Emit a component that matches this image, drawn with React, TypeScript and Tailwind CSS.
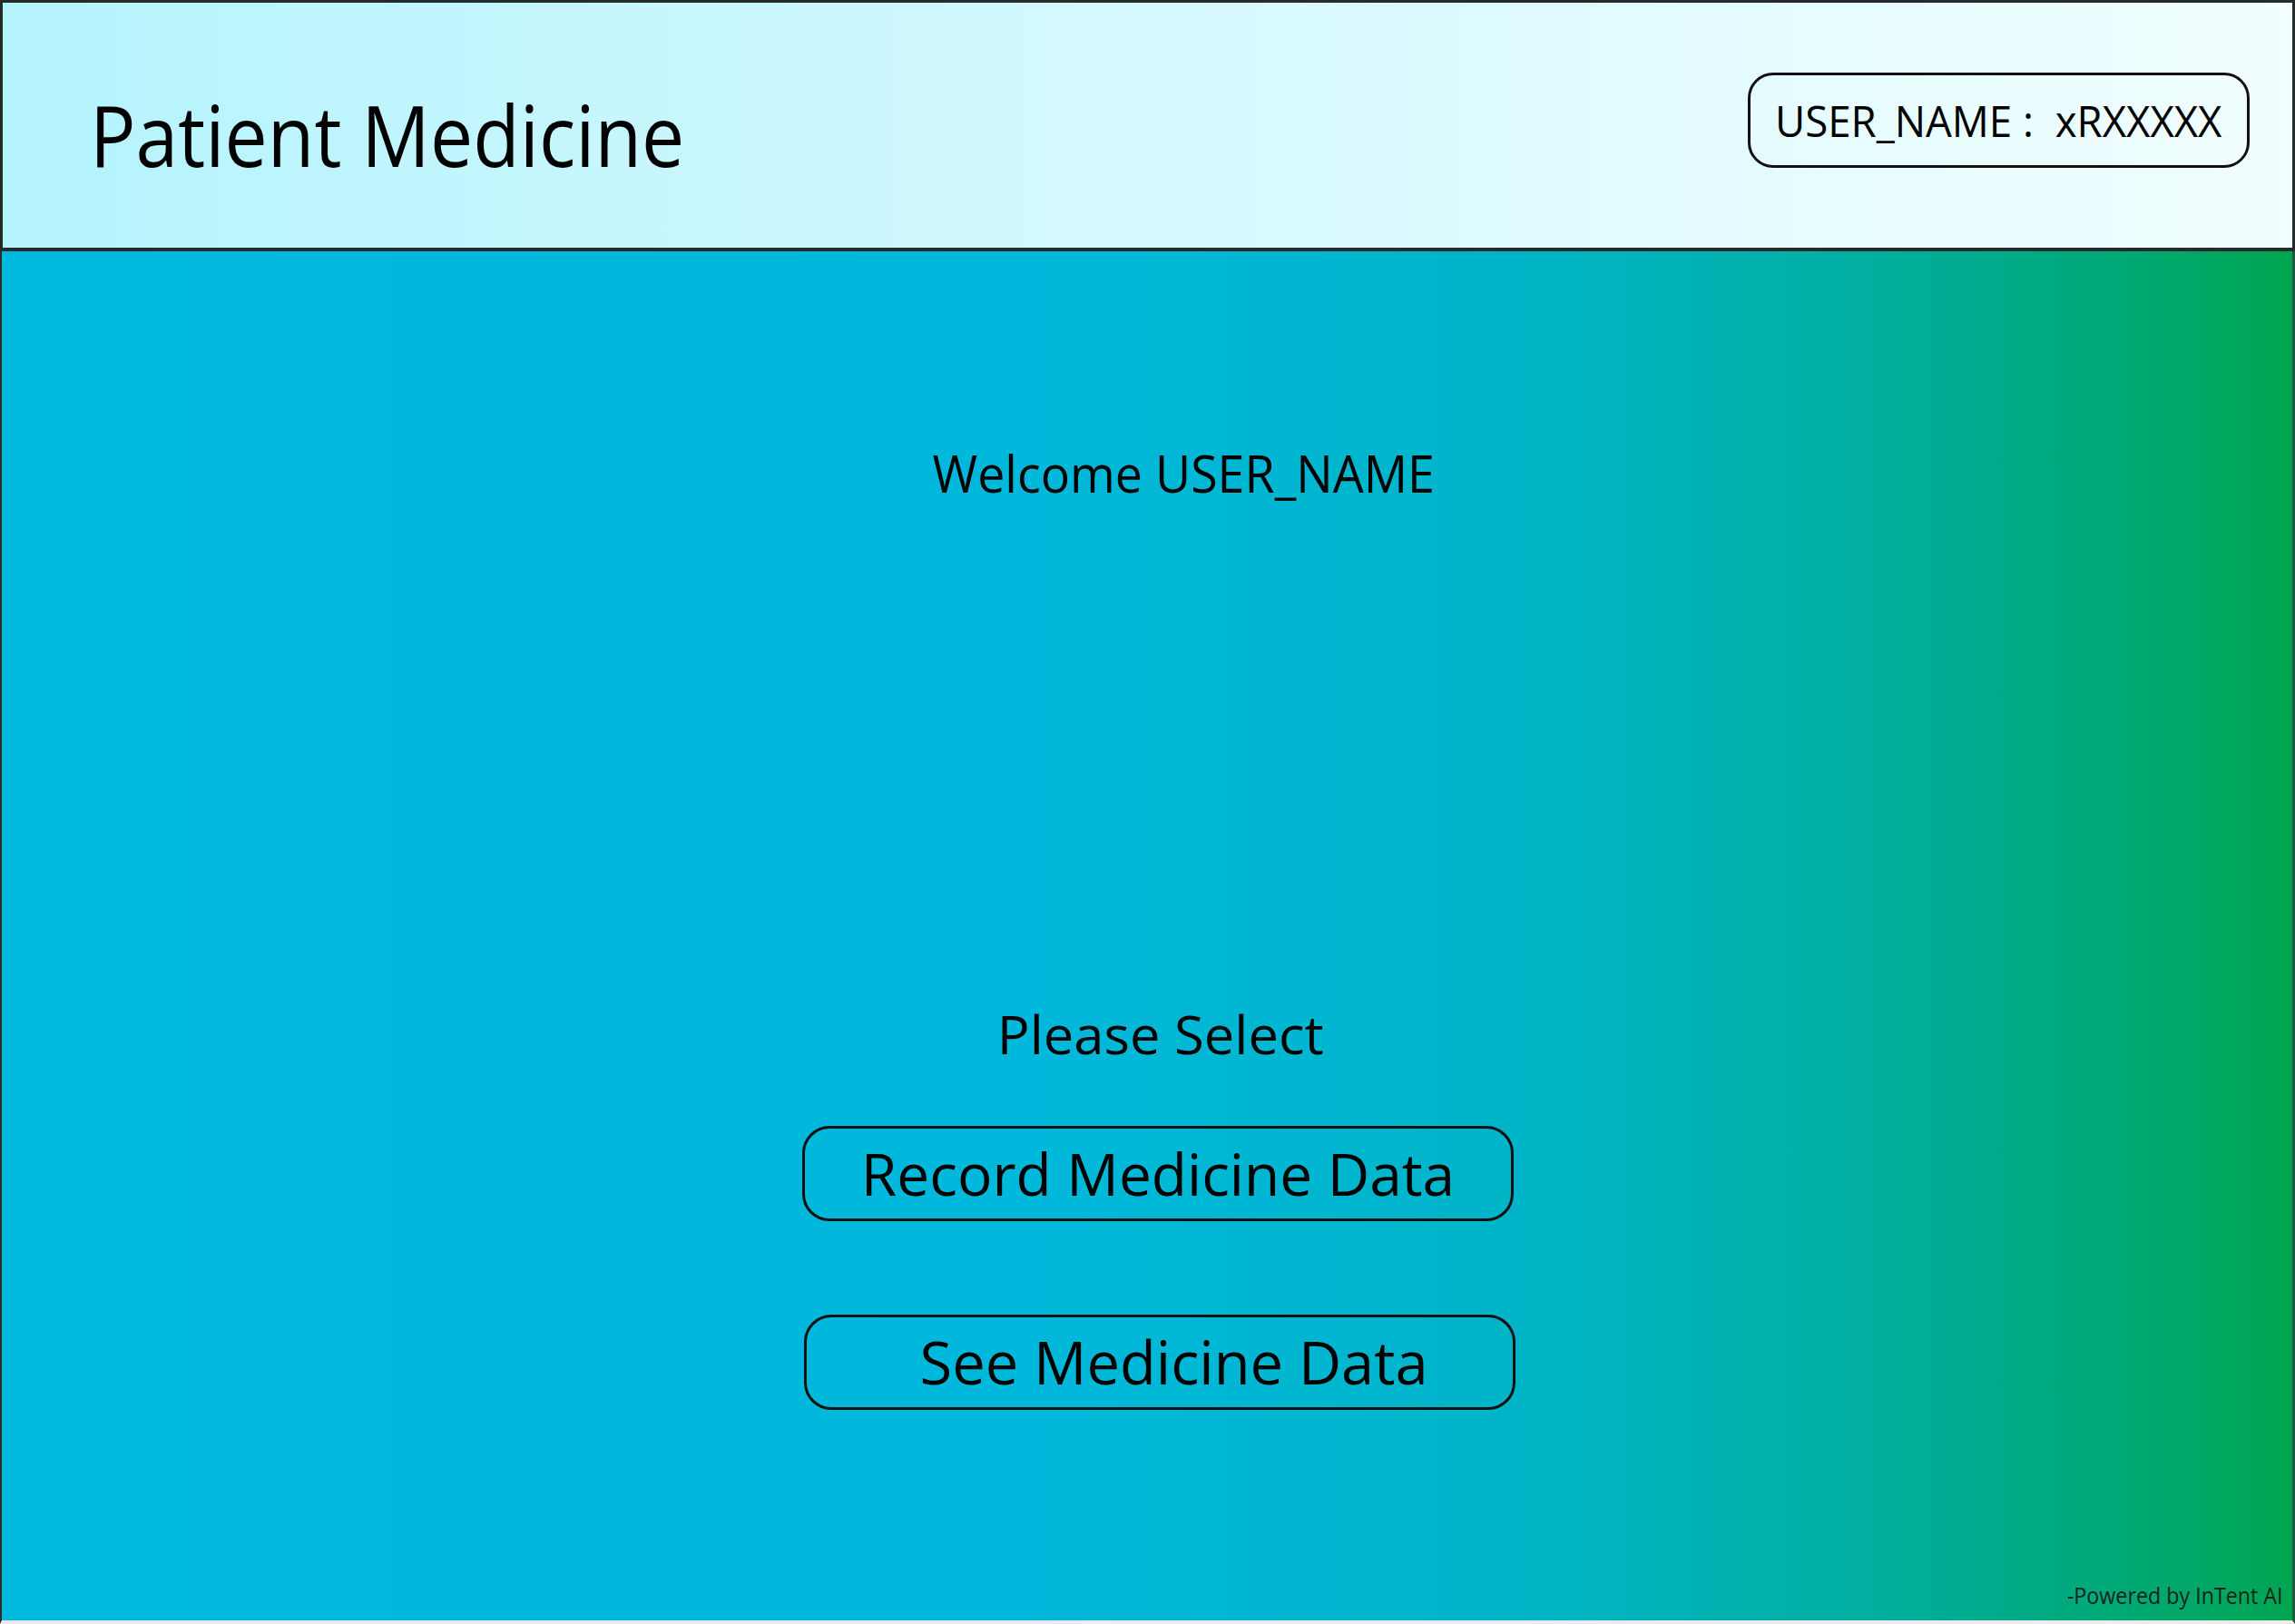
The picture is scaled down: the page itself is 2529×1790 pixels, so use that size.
export default function App() {
  return (
    <div
      className="w-[2529px] h-[1790px] flex flex-col bg-[#e9ecec] text-black"
      style={{ fontFamily: '"Open Sans", "Noto Sans", sans-serif' }}
    >
      {/* top bar */}
      <header className="h-[277px] shrink-0 flex items-start justify-between border-[3px] border-b-4 border-[#252a2b] bg-linear-to-r from-[#b5f3fd] to-[#f2feff]">
        <h1 className="mt-[98px] ml-[96px] text-[94px] leading-none font-normal whitespace-nowrap origin-left scale-x-[0.895]">
          Patient Medicine
        </h1>

        <div className="mt-[77px] mr-[47px] w-[553px] h-[105px] flex items-center justify-center rounded-[28px] border-[3px] border-[#111]">
          <span className="text-[48px] leading-none whitespace-pre scale-x-[0.95]">
            {"USER_NAME :  xRXXXXX"}
          </span>
        </div>
      </header>

      {/* main area */}
      <main className="flex-1 flex flex-col items-center border-l-2 border-r-[3px] border-b-4 border-l-[#2b2b2b] border-r-[#1d5a44] border-b-[#e9ecec] bg-[linear-gradient(90deg,#00b9df_0%,#00b8db_45%,#00b4c8_66%,#00ae9e_82%,#00a86f_94%,#00a54f_100%)]">
        <p className="mt-[216px] ml-[80px] text-[56px] leading-none whitespace-nowrap scale-x-[0.96]">
          Welcome USER_NAME
        </p>

        <p className="mt-[562px] ml-[30px] text-[58px] leading-none whitespace-nowrap scale-x-[1.03]">
          Please Select
        </p>

        <button className="mt-[72px] ml-[24px] w-[784px] h-[105px] flex items-center justify-center rounded-[30px] border-[3px] border-[#111] cursor-pointer">
          <span className="text-[64px] leading-none whitespace-nowrap">
            Record Medicine Data
          </span>
        </button>

        <button className="mt-[103px] ml-[27px] w-[784px] h-[105px] flex items-center justify-center pl-[32px] rounded-[30px] border-[3px] border-[#111] cursor-pointer">
          <span className="text-[65px] leading-none whitespace-nowrap">
            See Medicine Data
          </span>
        </button>

        <p className="mt-auto self-end mr-[10px] mb-[15px] text-[25px] leading-none whitespace-nowrap text-[#10241c] scale-x-[0.93] origin-right">
          -Powered by InTent AI
        </p>
      </main>
    </div>
  )
}
